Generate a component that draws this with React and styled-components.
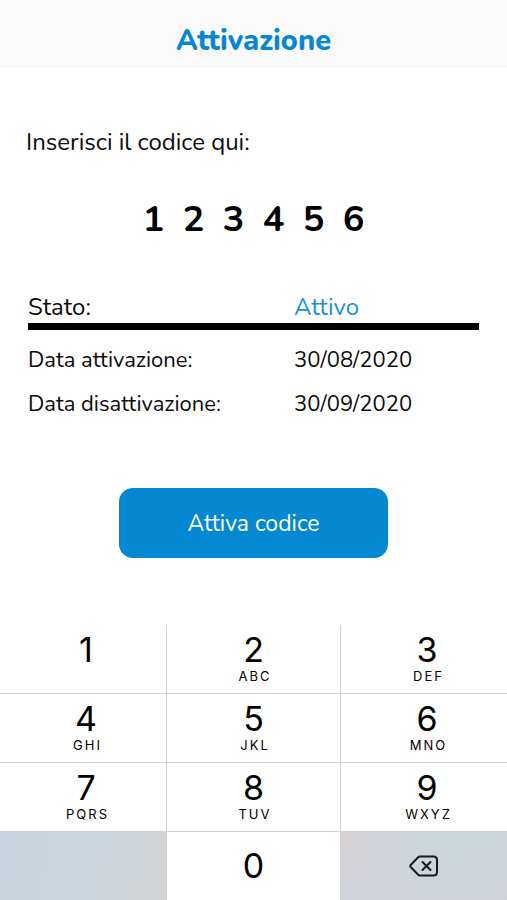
import React, { useState } from 'react';
import styled, { createGlobalStyle } from 'styled-components';

const GlobalStyle = createGlobalStyle`
  * {
    box-sizing: border-box;
  }

  body {
    margin: 0;
    background: #fff;
    color: #0c0c0c;
    font-family: Nunito, Lato, sans-serif;
  }
`;

const Screen = styled.div`
  min-height: 100vh;
  display: flex;
  flex-direction: column;
`;

const Header = styled.header`
  padding: 21px 16px 7px;
  background: #fafafa;
  text-align: center;
`;

const Title = styled.h1`
  margin: 0;
  color: #0787d1;
  font-size: 29px;
  font-weight: 800;
  line-height: 40px;
`;

const Form = styled.form`
  flex: 1;
  display: flex;
  flex-direction: column;
  padding: 56px 26px 40px;
`;

const CodeGroup = styled.fieldset`
  margin: 0;
  padding: 0;
  border: none;
  min-width: 0;
`;

const CodeLabel = styled.legend`
  padding: 0;
  font-size: 24px;
  line-height: 36px;
`;

const CodeDigits = styled.div`
  display: flex;
  justify-content: center;
  margin-top: 37px;
`;

const CodeDigit = styled.input`
  width: 40px;
  height: 44px;
  padding: 0;
  border: none;
  outline: none;
  background: transparent;
  color: #000;
  font-family: inherit;
  font-size: 36px;
  font-weight: 700;
  text-align: center;
`;

const StatusTable = styled.table`
  width: calc(100% - 4px);
  margin: 49px 2px 0;
  border-spacing: 0;
  table-layout: fixed;
  text-align: left;

  th {
    width: 59%;
  }

  th, td {
    height: 44px;
    padding: 0;
    font-size: 22px;
    font-weight: 400;
    line-height: 28px;
  }

  thead th, thead td {
    height: 40px;
    border-bottom: 7px solid #000;
    font-size: 24px;
  }

  tbody tr:first-child > * {
    height: 52px;
    padding-top: 8px;
  }

  thead td {
    color: #1a8fd6;
  }
`;

const SubmitButton = styled.button`
  align-self: center;
  width: 59%;
  height: 70px;
  margin-top: 62px;
  border: none;
  border-radius: 14px;
  background: #0488d2;
  color: #fff;
  font-family: inherit;
  font-size: 23px;
  cursor: pointer;
`;

const Keypad = styled.div`
  display: grid;
  grid-template-columns: 166fr 173fr 166fr;
  grid-auto-rows: 68px;
  gap: 1px;
  background: #d2d2d3;
`;

const Key = styled.button`
  display: flex;
  flex-direction: column;
  align-items: center;
  justify-content: ${props => (props.$single ? 'center' : 'flex-start')};
  padding: ${props => (props.$single ? '0' : '7px')} 0 0 ${props => (props.$outer ? '6px' : '0')};
  border: none;
  background: #fff;
  color: #000;
  font-family: Inter, sans-serif;
  cursor: pointer;
`;

const KeyNumber = styled.span`
  font-size: 34px;
  line-height: 36px;
`;

/* left padding evens out the tracking after the last letter */
const KeyLetters = styled.span`
  padding-left: 3px;
  font-size: 13px;
  line-height: 16px;
  letter-spacing: 2px;
`;

const BlankKey = styled.div`
  background: linear-gradient(100deg, #cbd5df, #cdd5dc 60%, #d2d4d5);
`;

const DeleteKey = styled(Key)`
  background:
    linear-gradient(to bottom, transparent, #d0d4da),
    linear-gradient(to right, #d9d1d4, #d0d5dc 30%, #cad7d8 65%, #ced6d9);
`;

const keys = [
  { number: '1', letters: '' },
  { number: '2', letters: 'ABC' },
  { number: '3', letters: 'DEF' },
  { number: '4', letters: 'GHI' },
  { number: '5', letters: 'JKL' },
  { number: '6', letters: 'MNO' },
  { number: '7', letters: 'PQRS' },
  { number: '8', letters: 'TUV' },
  { number: '9', letters: 'WXYZ' },
];

const CODE_LENGTH = 6;

const DeleteIcon = () => (
  <svg width="30" height="22" viewBox="0 0 30 22" fill="none" stroke="#15191c" strokeWidth="2" strokeLinecap="round" strokeLinejoin="round" aria-hidden="true">
    <path d="M11 1.5H24.5Q28 1.5 28 5V17Q28 20.5 24.5 20.5H11Q10 20.5 9.2 19.7L1.9 12.3Q.7 11 1.9 9.7L9.2 2.3Q10 1.5 11 1.5Z" />
    <path d="M13.5 7L21.5 15M21.5 7L13.5 15" />
  </svg>
);

export default function App() {
  const [code, setCode] = useState('123456');

  const addDigit = digit => setCode(prev => (prev + digit).slice(0, CODE_LENGTH));
  const removeDigit = () => setCode(prev => prev.slice(0, -1));

  function handleDigitChange(index, value) {
    setCode(prev => prev.slice(0, index) + value.replace(/\D/g, '') + prev.slice(index + 1));
  }

  return (
    <Screen>
      <GlobalStyle />
      <Header>
        <Title>Attivazione</Title>
      </Header>
      <Form onSubmit={e => e.preventDefault()}>
        <CodeGroup>
          <CodeLabel>Inserisci il codice qui:</CodeLabel>
          <CodeDigits>
            {Array.from({ length: CODE_LENGTH }, (_, i) => (
              <CodeDigit
                key={i}
                type="text"
                inputMode="numeric"
                maxLength={1}
                aria-label={`Cifra ${i + 1}`}
                value={code[i] || ''}
                onChange={e => handleDigitChange(i, e.target.value)}
              />
            ))}
          </CodeDigits>
        </CodeGroup>
        <StatusTable>
          <thead>
            <tr>
              <th scope="row">Stato:</th>
              <td>Attivo</td>
            </tr>
          </thead>
          <tbody>
            <tr>
              <th scope="row">Data attivazione:</th>
              <td>30/08/2020</td>
            </tr>
            <tr>
              <th scope="row">Data disattivazione:</th>
              <td>30/09/2020</td>
            </tr>
          </tbody>
        </StatusTable>
        <SubmitButton type="submit">Attiva codice</SubmitButton>
      </Form>
      <Keypad>
        {keys.map(({ number, letters }, i) => (
          <Key key={number} type="button" $outer={i % 3 !== 1} onClick={() => addDigit(number)}>
            <KeyNumber>{number}</KeyNumber>
            {letters && <KeyLetters>{letters}</KeyLetters>}
          </Key>
        ))}
        <BlankKey />
        <Key type="button" $single onClick={() => addDigit('0')}>
          <KeyNumber>0</KeyNumber>
        </Key>
        <DeleteKey type="button" $single aria-label="Cancella" onClick={removeDigit}>
          <DeleteIcon />
        </DeleteKey>
      </Keypad>
    </Screen>
  );
}
